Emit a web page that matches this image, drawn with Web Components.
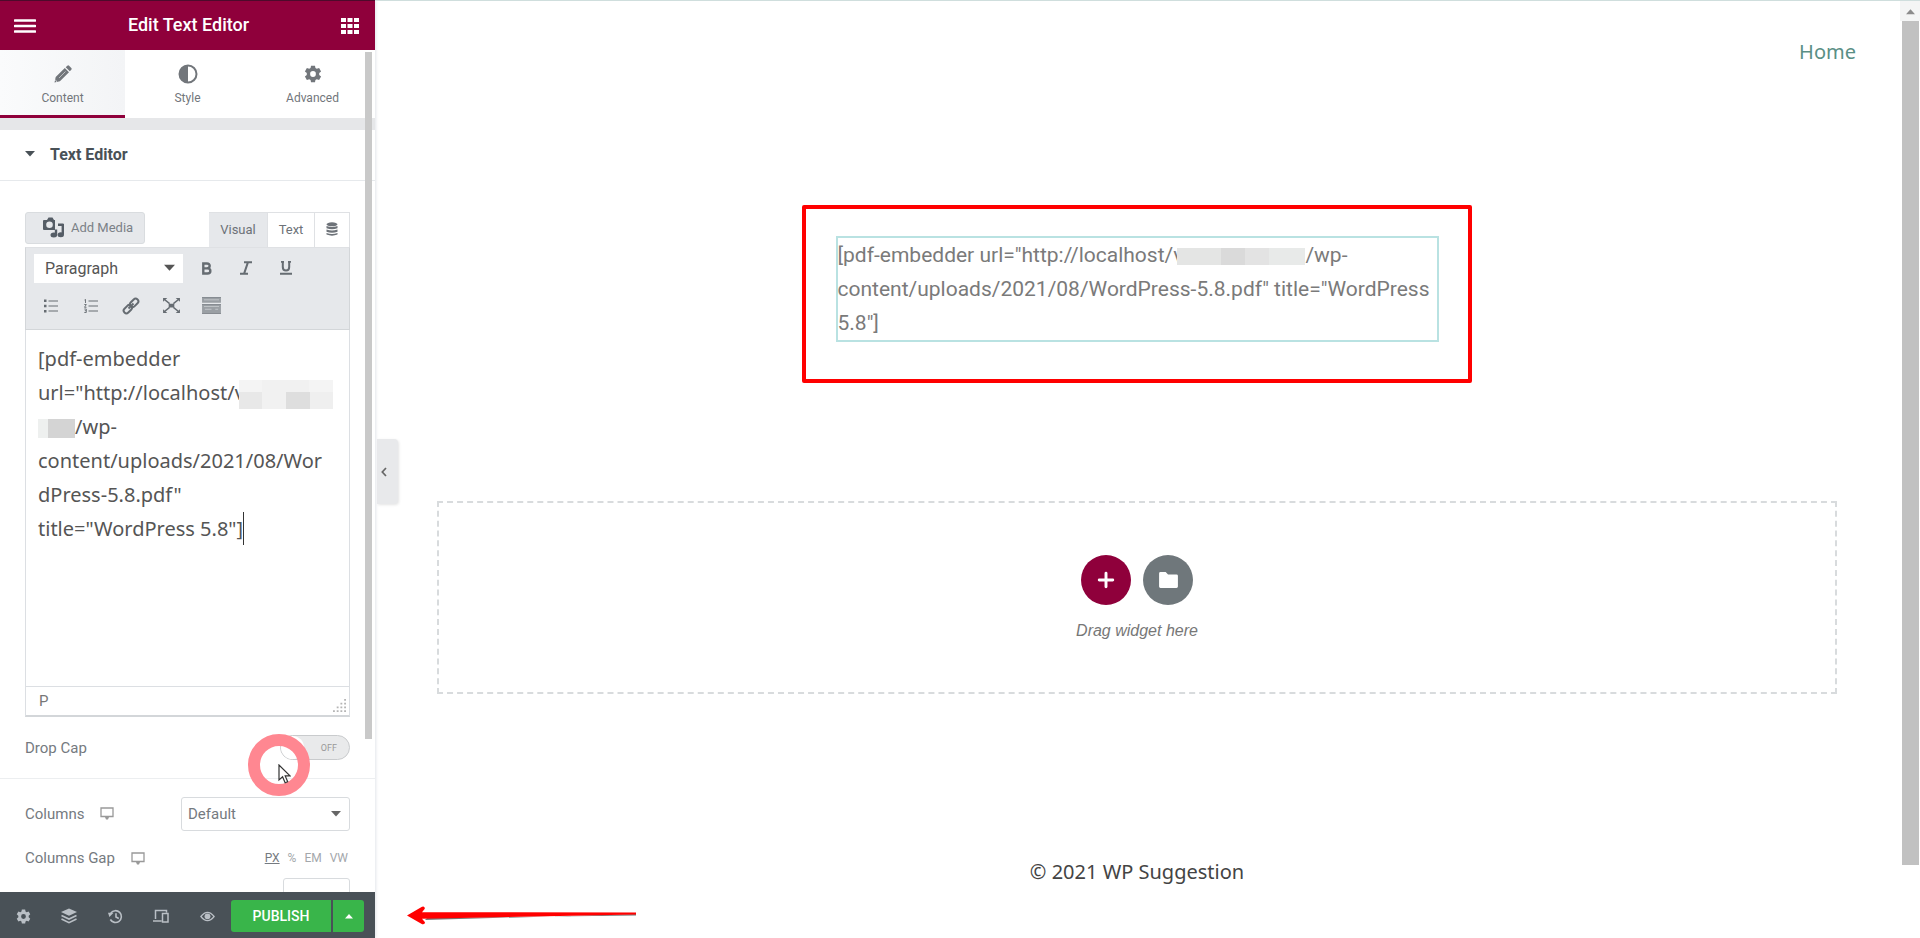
<!DOCTYPE html>
<html lang="en">
<head>
<meta charset="utf-8">
<title>Edit Text Editor</title>
<style>
html, body {
    height: 100%;
}
body {
    margin: 0;
    overflow: hidden;
    background: #fff;
    color: #6d7882;
    font-family: Roboto, "Liberation Sans", sans-serif;
}
</style>
</head>
<body>
<builder-app>
    <builder-panel slot="panel">
        <panel-header slot="header">Edit Text Editor</panel-header>
        <panel-tabs slot="header"></panel-tabs>
        <panel-section label="Text Editor">
            <rich-editor></rich-editor>
            <switch-control label="Drop Cap"></switch-control>
            <columns-control></columns-control>
            <gap-control></gap-control>
        </panel-section>
        <panel-footer slot="footer"></panel-footer>
    </builder-panel>
    <page-preview></page-preview>
</builder-app>
<script>
'use strict';
(function () {
    const ICONS = {
        menu: ['0 0 22 14', '<path d="M1 1.5h20M1 7h20M1 12.5h20" stroke="currentColor" stroke-width="2.6" stroke-linecap="round"/>'],
        grid: ['0 0 18 16', '<path d="M0 0h5v4H0zM6.5 0h5v4h-5zM13 0h5v4h-5zM0 6h5v4H0zM6.5 6h5v4h-5zM13 6h5v4h-5zM0 12h5v4H0zM6.5 12h5v4h-5zM13 12h5v4h-5z" fill="currentColor"/>'],
        pencil: ['0 0 18 18', '<path d="M.5 17.5l1.2-5.500L10.800 3l4.200 4.200-9.100 9.100zM11.700 2.200l1.600-1.500q.9-.8 1.800 0l2.200 2.200q.8.9 0 1.800l-1.500 1.600z" fill="currentColor"/><path d="M5 13l6.500-6.500" stroke="#eceef0" stroke-width=".6"/><path d="M1.300 15l1.700 1.700" stroke="#eceef0" stroke-width="1"/>'],
        contrast: ['0 0 20 20', '<circle cx="10" cy="10" r="8.500" fill="none" stroke="currentColor" stroke-width="2"/><path d="M10 1.500a8.500 8.500 0 0 0 0 17z" fill="currentColor"/>'],
        gear: ['0 0 20 20', '<path fill-rule="evenodd" fill="currentColor" d="M7.800.8h4.400l.5 2.600 1.500.9 2.600-1 2.200 3.800-2.100 1.800v2.200l2.100 1.800-2.200 3.800-2.600-1-1.500.9-.5 2.600H7.800l-.5-2.600-1.500-.9-2.600 1L1 12.900l2.100-1.800V8.900L1 7.100l2.200-3.800 2.600 1 1.500-.9zM10 6.800a3.200 3.200 0 1 0 0 6.400 3.200 3.200 0 0 0 0-6.400z"/>'],
        down: ['0 0 10 6', '<path d="M0 0h10L5 5.500z" fill="currentColor"/>'],
        up: ['0 0 10 6', '<path d="M0 5.500h10L5 0z" fill="currentColor"/>'],
        media: ['0 0 22 21', '<path fill-rule="evenodd" fill="currentColor" d="M1 3h3l1.500-2.500h4L11 3h1v10H1q-1 0-1-1V4q0-1 1-1zM6.500 4.500a3.300 3.300 0 1 0 0 6.600 3.300 3.300 0 0 0 0-6.600z"/><path d="M13 12.500v6M19.800 7v10.500M15 7.800h5.500" fill="none" stroke="currentColor" stroke-width="2.400"/><ellipse cx="10.800" cy="18" rx="3.300" ry="2.500" fill="currentColor"/><ellipse cx="17.800" cy="17.800" rx="3.200" ry="2.500" fill="currentColor"/>'],
        database: ['0 0 12 14', '<ellipse cx="6" cy="2.300" rx="5.500" ry="2" fill="currentColor"/><path d="M.5 4q5.500 2 11 0v2.200q-5.500 2-11 0zM.5 7.500q5.500 2 11 0v2.200q-5.500 2-11 0zM.5 11q5.500 2 11 0v1.500q-5.500 2.300-11 0z" fill="currentColor"/>'],
        bold: ['0 0 12 14', '<path fill="none" stroke="currentColor" stroke-width="2.600" d="M2.500 1.500h4q3 0 3 2.600T6.500 6.800h-4zM2.500 6.800H7q3.200 0 3.200 2.800T7 12.500H2.500z"/>'],
        italic: ['0 0 12 14', '<path fill="none" stroke="currentColor" stroke-width="2" d="M4 1.200h8M0 12.800h8M8 1.200L4 12.800"/>'],
        underline: ['0 0 12 14', '<path fill="none" stroke="currentColor" stroke-width="2" d="M2.800 0v6q0 3.500 3.200 3.500T9.200 6V0M0 12.800h12M1 .800h3M8 .800h3"/>'],
        ul: ['0 0 14 14', '<path stroke="currentColor" stroke-width="1.200" d="M4.500 2H14M4.500 7H14M4.500 12H14"/><path fill="currentColor" d="M0 .500h2.500V3H0zM0 5.800h2.500v2.500H0zM0 11h2.500v2.500H0z"/>'],
        ol: ['0 0 14 14', '<path stroke="currentColor" stroke-width="1.200" d="M4.500 2H14M4.500 7H14M4.500 12H14"/><path fill="none" stroke="currentColor" stroke-width=".9" d="M.500 1L1.500.300V4M.300 5.500h2L.500 8.300h2M.300 10h2v3.500h-2M.800 11.700h1.500"/>'],
        link: ['0 0 18 18', '<g fill="none" stroke="currentColor" stroke-width="2"><rect x="-4.700" y="-2.700" width="9.400" height="5.400" rx="2.700" transform="translate(5.800 12.200) rotate(-45)"/><rect x="-4.700" y="-2.700" width="9.400" height="5.400" rx="2.700" transform="translate(12.200 5.800) rotate(-45)"/><path d="M6.500 11.500l5-5"/></g>'],
        expand: ['0 0 18 16', '<path stroke="currentColor" stroke-width="1.400" d="M2 2l5 4M16 2l-5 4M2 14l5-4M16 14l-5-4"/><path fill="currentColor" d="M0 0h4.500L0 4zM18 0h-4.500L18 4zM0 16h4.500L0 12zM18 16h-4.500l4.500-4zM6 6h6v4H6z"/>'],
        kitchen: ['0 0 20 18', '<path fill="#9a9fa4" d="M0 0h20v6H0zM0 7.500h20V18H0z"/><path stroke="#c3c7cb" d="M2 3h16M2 10h16M3 13h7M14 13h3" stroke-width="1"/><path fill="none" stroke="#858a90" d="M0 .5h20M0 8h20M0 17.500h20"/>'],
        desktop: ['0 0 14 13', '<path fill="none" stroke="currentColor" stroke-width="1.300" d="M1 1h12v8.500H1z"/><path fill="currentColor" d="M5 10h4l-1 2.500H6z"/>'],
        layers: ['0 0 16 16', '<path fill="currentColor" d="M8 .500L16 4 8 7.700 0 4z"/><path fill="none" stroke="currentColor" stroke-width="1.600" d="M.5 7.500L8 11l7.500-3.500M.5 11L8 14.700 15.500 11"/>'],
        history: ['0 0 16 16', '<path fill="none" stroke="currentColor" stroke-width="1.700" d="M3 4.200a6.300 6.300 0 1 1-.5 7M8.500 4.500v4l3 1.700"/><path fill="currentColor" d="M0 4h6L1.500 8.500z"/>'],
        responsive: ['0 0 16 14', '<path fill="none" stroke="currentColor" stroke-width="1.500" d="M2.500 10V1.500h11v2M0 12h8.500M9.500 4.500h5.500v8.500H9.500z"/>'],
        eye: ['0 0 16 12', '<path fill="none" stroke="currentColor" stroke-width="1.400" d="M.8 6Q8-3 15.200 6 8 15 .8 6z"/><circle cx="8" cy="5.800" r="3.200" fill="currentColor"/>'],
        left: ['0 0 6 10', '<path fill="none" stroke="currentColor" stroke-width="1.700" d="M5 1L1.300 5 5 9"/>'],
        plus: ['0 0 16 16', '<path stroke="currentColor" stroke-width="2.600" stroke-linecap="round" d="M8 2v12M2 8h12"/>'],
        folder: ['0 0 20 17', '<path fill="currentColor" d="M1.500 0H7l2.500 2.700h9Q20 2.700 20 4v11.500q0 1.500-1.500 1.500h-17Q0 17 0 15.500v-14Q0 0 1.500 0z"/>'],
        grip: ['0 0 14 14', '<path fill="currentColor" d="M12 0h2v2h-2zM12 4h2v2h-2zM12 8h2v2h-2zM12 12h2v2h-2zM8 4h2v2H8zM8 8h2v2H8zM8 12h2v2H8zM4 8h2v2H4zM4 12h2v2H4zM0 12h2v2H0z"/>'],
        pointer: ['0 0 13 20', '<path fill="#fff" stroke="#333" stroke-width="1.200" d="M1 1v15l3.600-3.200 2.500 6 2.600-1.100-2.500-5.800H12z"/>'],
        arrow: ['0 0 230 20', '<path fill="#777" d="M18 14L229 8v1.500L20 12z"/><path fill="#f00" d="M0 9.500L15 .8q3-.8 2.800 2L15 6.200 229 6.500v2L15 12.800l3 3.400q0 2.600-2.800 2z"/>']
    };

    function icon(name, width, height) {
        const [box, body] = ICONS[name];
        return `<svg viewBox="${box}" width="${width}" height="${height}" aria-hidden="true">${body}</svg>`;
    }

    const BASE = `
* { box-sizing: border-box; }
:host { display: block; box-sizing: border-box; }
svg { display: block; flex: none; }
button, select, input {
    margin: 0;
    padding: 0;
    border: 0;
    background: none;
    font: inherit;
    color: inherit;
    border-radius: 0;
}
select { appearance: none; }
button { cursor: pointer; }
`;

    class BuilderElement extends HTMLElement {
        connectedCallback() {
            if (this.shadowRoot) return;
            const shadowRoot = this.attachShadow({mode: 'open'});
            shadowRoot.innerHTML = `<style>${BASE}${this.css()}</style>${this.html()}`;
            this._attachEventHandlers();
        }

        css() {
            return '';
        }

        html() {
            return '<slot></slot>';
        }

        _attachEventHandlers() {
        }
    }

    class BuilderApp extends BuilderElement {
        css() {
            return `
:host {
    display: grid;
    grid-template-columns: 375px 1fr;
    height: 100vh;
}
`;
        }

        html() {
            return '<slot name="panel"></slot><slot></slot>';
        }
    }

    class BuilderPanel extends BuilderElement {
        css() {
            return `
:host {
    display: flex;
    flex-direction: column;
    position: relative;
    min-height: 0;
    background: #fff;
    box-shadow: 1px 0 3px #e3e5ea;
    z-index: 1;
}
.content {
    flex: 1;
    min-height: 0;
    overflow: hidden;
    border-top: 12px solid #e6e7e9;
}
.thumb {
    position: absolute;
    top: 52px;
    right: 3px;
    width: 7px;
    bottom: 199px;
    background: #c9c9c9;
}
.click {
    position: absolute;
    left: 248px;
    bottom: 142px;
    width: 62px;
    height: 62px;
    border: 12px solid #ff8791;
    border-radius: 50%;
}
.click svg {
    position: absolute;
    left: 18px;
    top: 18px;
}
`;
        }

        html() {
            return `
<slot name="header"></slot>
<div class="content"><slot></slot></div>
<slot name="footer"></slot>
<div class="thumb"></div>
<div class="click">${icon('pointer', 13, 20)}</div>
`;
        }
    }

    class PanelHeader extends BuilderElement {
        css() {
            return `
:host {
    display: flex;
    align-items: center;
    justify-content: space-between;
    height: 50px;
    flex: none;
    padding: 0 16px 0 14px;
    border-top: 1px solid #4d0a2b;
    background: #8f003b;
    color: #fff;
}
h1 {
    margin: 0;
    padding-bottom: 3px;
    font-size: 18px;
    font-weight: 500;
}
`;
        }

        html() {
            return `
<button aria-label="Menu">${icon('menu', 22, 14)}</button>
<h1><slot></slot></h1>
<button aria-label="Widgets">${icon('grid', 18, 16)}</button>
`;
        }
    }

    class PanelTabs extends BuilderElement {
        css() {
            return `
:host {
    display: grid;
    grid-template-columns: repeat(3, 1fr);
    height: 68px;
    flex: none;
}
button {
    display: flex;
    flex-direction: column;
    align-items: center;
    gap: 6px;
    padding-top: 14px;
    border-bottom: 3px solid transparent;
    font-size: 12px;
    line-height: 16px;
    color: #72767b;
}
button.active {
    border-color: #8f003b;
    background: linear-gradient(to right, #fafbfc, #f3f4f6);
}
svg { height: 20px; }
`;
        }

        html() {
            return `
<button class="active">${icon('pencil', 18, 18)}Content</button>
<button>${icon('contrast', 20, 20)}Style</button>
<button>${icon('gear', 18, 18)}Advanced</button>
`;
        }

        _attachEventHandlers() {
            const buttons = this.shadowRoot.querySelectorAll('button');
            buttons.forEach($btn => $btn.addEventListener('click', () => {
                buttons.forEach($other => $other.classList.toggle('active', $other === $btn));
            }));
        }
    }

    class PanelSection extends BuilderElement {
        css() {
            return `
.heading {
    display: flex;
    align-items: center;
    gap: 15px;
    width: 100%;
    height: 51px;
    padding: 0 25px 2px;
    border-bottom: 1px solid #e6e9ec;
    color: #495157;
    font-size: 16px;
    font-weight: 700;
}
.controls { padding-top: 31px; }
`;
        }

        html() {
            return `
<button class="heading">${icon('down', 10, 6)}${this.getAttribute('label')}</button>
<div class="controls"><slot></slot></div>
`;
        }
    }

    class RichEditor extends BuilderElement {
        css() {
            return `
:host { padding: 0 25px; }
.top {
    display: flex;
    align-items: flex-start;
    height: 35px;
    font-size: 13px;
}
.media {
    display: flex;
    align-items: center;
    gap: 6px;
    width: 120px;
    height: 32px;
    padding: 0 0 2px 17px;
    border: 1px solid #d9dcdf;
    border-radius: 3px;
    background: #e6e8eb;
    color: #7b8187;
    margin-right: auto;
}
.media svg { color: #555d66; }
.tab {
    display: flex;
    align-items: center;
    justify-content: center;
    width: 47px;
    height: 35px;
    padding-bottom: 2px;
    border: 1px solid #dfe1e4;
    border-bottom: 0;
    border-left: 0;
    color: #6d7278;
}
.tab.active {
    width: 59px;
    background: #e6e8eb;
}
.tab:last-child { width: 35px; }
.toolbar {
    height: 83px;
    padding: 5px 8px;
    border: 1px solid #d3d6d9;
    border-top-color: #dfe1e4;
    background: #e6e8eb;
    color: #666c72;
}
.row {
    display: flex;
    align-items: center;
    height: 30px;
}
.row + .row { margin-top: 6px; padding-top: 3px; }
.row button {
    display: flex;
    align-items: center;
    justify-content: center;
    width: 40px;
    height: 30px;
}
.row + .row button:first-child { margin-left: -3px; }
.format {
    display: grid;
    width: 149px;
    height: 29px;
    margin-right: 3px;
    background: #fff;
    color: #555;
    font-size: 16px;
}
.format > * { grid-area: 1 / 1; }
.format select { padding-left: 11px; }
.format svg {
    align-self: center;
    justify-self: end;
    margin-right: 8px;
    pointer-events: none;
}
.body {
    height: 356px;
    padding: 12px 12px;
    border: solid #dcdfe3;
    border-width: 0 1px;
    color: #555;
    font-family: "Noto Sans", "Open Sans", sans-serif;
    font-size: 20px;
    line-height: 34px;
    outline: 0;
}
.body p { margin: 0; }
.mosaic {
    display: inline-block;
    vertical-align: middle;
}
.wide {
    width: 94px;
    height: 29px;
    margin-left: -6px;
    background:
        linear-gradient(90deg, #f4f4f4 23px, #f1f1f1 23px, #f1f1f1 70px, #f4f4f4 70px) 0 0 / 100% 12px no-repeat,
        linear-gradient(90deg, #e8e8e8 23px, #f1f1f1 23px, #f1f1f1 47px, #dedede 47px, #dedede 71px, #efefef 71px);
}
.narrow {
    width: 37px;
    height: 19px;
    background: linear-gradient(90deg, #eef0ef 10px, #d4d4d4 10px);
}
.caret {
    border-right: 1px solid #333;
    padding: 3px 0;
}
.status {
    display: flex;
    align-items: center;
    justify-content: space-between;
    height: 31px;
    padding: 0 3px 0 13px;
    border: 1px solid #dcdfe3;
    border-bottom: 2px solid #d3d6d9;
    font-size: 15px;
    color: #777;
}
.status svg { align-self: flex-end; margin-bottom: 3px; color: #b5b5b5; }
`;
        }

        html() {
            return `
<div class="top">
    <button class="media">${icon('media', 22, 21)}Add Media</button>
    <button class="tab active">Visual</button>
    <button class="tab">Text</button>
    <button class="tab" aria-label="Dynamic tags">${icon('database', 12, 14)}</button>
</div>
<div class="toolbar">
    <div class="row">
        <div class="format"><select aria-label="Format"><option>Paragraph</option><option>Heading 1</option></select>${icon('down', 11, 8)}</div>
        <button aria-label="Bold">${icon('bold', 11, 13)}</button>
        <button aria-label="Italic">${icon('italic', 12, 14)}</button>
        <button aria-label="Underline">${icon('underline', 12, 14)}</button>
    </div>
    <div class="row">
        <button aria-label="Bulleted list">${icon('ul', 14, 14)}</button>
        <button aria-label="Numbered list">${icon('ol', 14, 14)}</button>
        <button aria-label="Insert link">${icon('link', 18, 18)}</button>
        <button aria-label="Fullscreen">${icon('expand', 17, 15)}</button>
        <button aria-label="Toolbar toggle">${icon('kitchen', 19, 17)}</button>
    </div>
</div>
<div class="body" contenteditable="true" role="textbox" aria-label="Content" spellcheck="false"><p>[pdf-embedder<br>url="http://localhost/v<span class="mosaic wide"></span><br><span class="mosaic narrow"></span>/wp-<br>content/uploads/2021/08/Wor<br>dPress-5.8.pdf"<br>title="WordPress 5.8"]<span class="caret"></span></p></div>
<div class="status"><span>P</span>${icon('grip', 13, 13)}</div>
`;
        }
    }

    class SwitchControl extends BuilderElement {
        css() {
            return `
:host {
    display: flex;
    align-items: center;
    justify-content: space-between;
    height: 62px;
    padding: 0 25px;
    border-bottom: 1px solid #eceef0;
    font-size: 15px;
    color: #757a80;
}
.switch {
    display: flex;
    align-items: center;
    justify-content: flex-end;
    width: 70px;
    height: 25px;
    padding-right: 12px;
    border: 1px solid #c9cbcd;
    border-radius: 13px;
    background: #e9eaeb;
    font-size: 9px;
    color: #999;
}
input {
    appearance: none;
    width: 23px;
    height: 23px;
    margin-right: auto;
    border-radius: 50%;
    background: #fff;
}
`;
        }

        html() {
            return `
<label for="toggle">${this.getAttribute('label')}</label>
<span class="switch"><input type="checkbox" id="toggle"><span class="state">OFF</span></span>
`;
        }

        _attachEventHandlers() {
            const $input = this.shadowRoot.querySelector('input');
            $input.addEventListener('change', () => {
                this.shadowRoot.querySelector('.state').textContent = $input.checked ? 'ON' : 'OFF';
            });
        }
    }

    class ColumnsControl extends BuilderElement {
        css() {
            return `
:host {
    display: flex;
    align-items: center;
    gap: 16px;
    height: 69px;
    padding: 0 25px;
    font-size: 15px;
    color: #757a80;
}
:host > svg, label + svg { color: #999; }
.field {
    display: grid;
    width: 169px;
    height: 34px;
    margin-left: auto;
    border: 1px solid #d8dbde;
    border-radius: 3px;
}
.field > * { grid-area: 1 / 1; }
select { padding-left: 6px; }
.field svg {
    align-self: center;
    justify-self: end;
    margin-right: 8px;
    color: #666;
    pointer-events: none;
}
`;
        }

        html() {
            return `
<label for="columns">Columns</label>${icon('desktop', 14, 13)}
<div class="field"><select id="columns"><option>Default</option><option>1</option><option>2</option></select>${icon('down', 10, 6)}</div>
`;
        }
    }

    class GapControl extends BuilderElement {
        css() {
            return `
:host {
    padding: 0 25px;
    font-size: 15px;
    color: #757a80;
}
.row {
    display: flex;
    align-items: center;
    gap: 16px;
    height: 20px;
}
.row svg { color: #999; }
.units {
    display: flex;
    gap: 8px;
    margin-left: auto;
    padding-right: 2px;
    font-size: 12px;
    color: #a3a7ab;
}
.units .active {
    color: #757a80;
    text-decoration: underline;
}
input {
    display: block;
    width: 67px;
    height: 34px;
    margin: 10px 0 0 auto;
    border: 1px solid #d8dbde;
    border-radius: 3px;
}
`;
        }

        html() {
            return `
<div class="row">
    <label for="gap">Columns Gap</label>${icon('desktop', 14, 13)}
    <div class="units"><button class="active">PX</button><button>%</button><button>EM</button><button>VW</button></div>
</div>
<input type="text" id="gap">
`;
        }
    }

    class PanelFooter extends BuilderElement {
        css() {
            return `
:host {
    display: flex;
    align-items: center;
    height: 46px;
    flex: none;
    padding: 2px 11px 0 0;
    background: #495157;
    color: #b9bfc5;
    position: relative;
}
nav {
    display: flex;
    flex: 1;
}
nav button {
    display: flex;
    align-items: center;
    justify-content: center;
    width: 46px;
    height: 44px;
}
.publish, .more {
    display: flex;
    align-items: center;
    justify-content: center;
    height: 32px;
    background: #39b54a;
    color: #fff;
}
.publish {
    width: 100px;
    margin-right: 2px;
    border-radius: 3px 0 0 3px;
    font-size: 14px;
    font-weight: 500;
}
.more {
    width: 31px;
    border-radius: 0 3px 3px 0;
}
`;
        }

        html() {
            return `
<nav>
    <button aria-label="Settings">${icon('gear', 15, 15)}</button>
    <button aria-label="Navigator">${icon('layers', 16, 16)}</button>
    <button aria-label="History">${icon('history', 15, 15)}</button>
    <button aria-label="Responsive mode">${icon('responsive', 16, 14)}</button>
    <button aria-label="Preview">${icon('eye', 15, 11)}</button>
</nav>
<button class="publish">PUBLISH</button>
<button class="more" aria-label="Save options">${icon('up', 8, 5)}</button>
`;
        }
    }

    class PagePreview extends BuilderElement {
        css() {
            return `
:host {
    display: grid;
    grid-template-columns: 1fr 20px;
    position: relative;
    min-width: 0;
    border-top: 1px solid #cfdedd;
}
.page {
    display: flex;
    flex-direction: column;
    padding: 0 63px 0 62px;
}
header {
    display: flex;
    justify-content: flex-end;
    align-items: center;
    height: 101px;
    margin-right: -19px;
    font-family: "Noto Sans", "Open Sans", sans-serif;
    font-size: 20px;
}
header a {
    color: #5a8f85;
    text-decoration: none;
}
.widget {
    position: relative;
    width: 603px;
    max-width: 100%;
    margin: 134px auto 159px;
    border: 2px solid #b9e2e2;
    font-size: 21px;
    line-height: 34px;
    color: #7a7a7a;
}
.widget p { margin: 0; }
.mosaic {
    display: inline-block;
    vertical-align: middle;
    width: 128px;
    height: 17px;
    margin-left: -6px;
    background: linear-gradient(90deg, #e4e5e4 44px, #dadada 44px, #dadada 68px, #e3e3e3 68px, #e3e3e3 92px, #e8eae9 92px);
}
.highlight {
    position: absolute;
    inset: -33px -35px -43px -36px;
    border: 4px solid #f00;
    border-radius: 2px;
    pointer-events: none;
}
.drop {
    display: flex;
    flex-direction: column;
    align-items: center;
    justify-content: center;
    gap: 16px;
    height: 193px;
    border: 2px dashed #d8dbdd;
    font-family: "Liberation Sans", sans-serif;
    font-size: 16px;
    font-style: italic;
    line-height: 20px;
    color: #777;
}
.actions {
    display: flex;
    gap: 12px;
}
.actions button {
    display: flex;
    align-items: center;
    justify-content: center;
    width: 50px;
    height: 50px;
    border-radius: 50%;
    background: #8f003b;
    color: #fff;
}
.actions .folder { background: #6f777b; }
footer {
    padding-top: 160px;
    text-align: center;
    font-family: "Noto Sans", "Open Sans", sans-serif;
    font-size: 20px;
    line-height: 36px;
    color: #444;
}
.scroll {
    display: flex;
    flex-direction: column;
    align-items: center;
    gap: 6px;
    padding-top: 8px;
    color: #8c8c8c;
    background: linear-gradient(#f4f5f5 20px, #fff 20px);
}
.scroll i {
    width: 17px;
    flex: 1;
    margin-bottom: 73px;
    background: #c1c1c1;
}
.collapse {
    display: flex;
    align-items: center;
    padding-left: 4px;
    position: absolute;
    left: 2px;
    top: 438px;
    width: 21px;
    height: 65px;
    border-radius: 0 4px 4px 0;
    background: #e8e9eb;
    box-shadow: 1px 1px 3px #e4e4e4;
    color: #666;
}
.arrow {
    position: absolute;
    left: 32px;
    bottom: 12px;
}
`;
        }

        html() {
            return `
<div class="page">
    <header><a href="#">Home</a></header>
    <div class="widget">
        <p>[pdf-embedder url="http://localhost/v<span class="mosaic"></span>/wp-<br>content/uploads/2021/08/WordPress-5.8.pdf" title="WordPress<br>5.8"]</p>
        <div class="highlight"></div>
    </div>
    <div class="drop">
        <div class="actions">
            <button aria-label="Add section">${icon('plus', 18, 18)}</button>
            <button class="folder" aria-label="Add template">${icon('folder', 19, 16)}</button>
        </div>
        Drag widget here
    </div>
    <footer>© 2021 WP Suggestion</footer>
</div>
<div class="scroll">${icon('up', 9, 6)}<i></i></div>
<button class="collapse" aria-label="Hide panel">${icon('left', 6, 10)}</button>
<div class="arrow">${icon('arrow', 230, 20)}</div>
`;
        }
    }

    window.customElements.define('builder-app', BuilderApp);
    window.customElements.define('builder-panel', BuilderPanel);
    window.customElements.define('panel-header', PanelHeader);
    window.customElements.define('panel-tabs', PanelTabs);
    window.customElements.define('panel-section', PanelSection);
    window.customElements.define('rich-editor', RichEditor);
    window.customElements.define('switch-control', SwitchControl);
    window.customElements.define('columns-control', ColumnsControl);
    window.customElements.define('gap-control', GapControl);
    window.customElements.define('panel-footer', PanelFooter);
    window.customElements.define('page-preview', PagePreview);
})();
</script>
</body>
</html>
